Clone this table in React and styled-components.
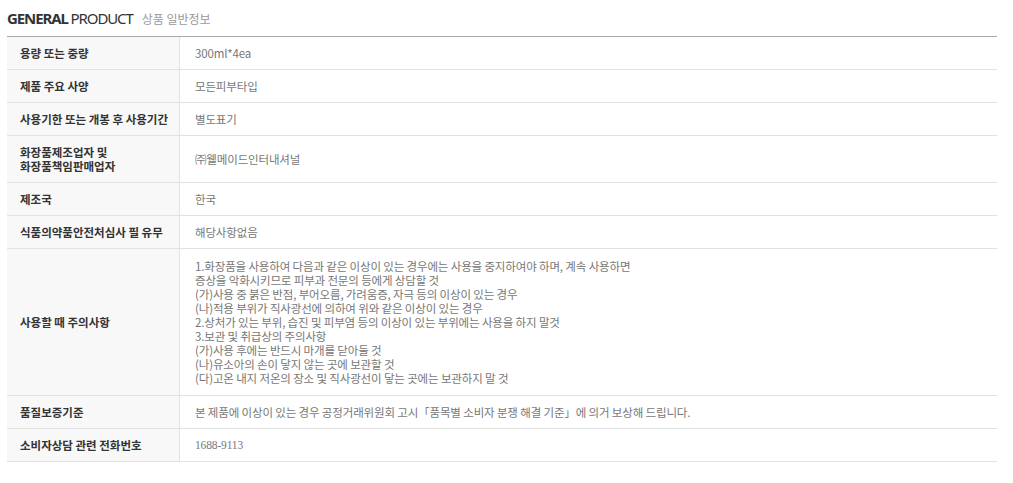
import React from "react";
import styled, { createGlobalStyle } from "styled-components";

const GlobalStyle = createGlobalStyle`
  body {
    margin: 0;
    background: #fff;
    font-family: "Noto Sans CJK KR", "Noto Sans", sans-serif;
  }
`;

const Wrap = styled.section`
  padding: 0 16px 0 7px;
  width: 990px;
`;

const Heading = styled.h3`
  margin: 5px 0 0;
  height: 32px;
  padding-bottom: 5px;
  box-sizing: border-box;
  display: flex;
  align-items: center;
  gap: 9px;
  font-family: "Noto Sans", sans-serif;
  font-size: 15px;
  font-weight: 400;
  letter-spacing: -1.1px;
  color: #333;
  border-bottom: 1px solid #aaa;

  b {
    font-weight: 700;
  }
`;

const Sub = styled.span`
  font-family: "Noto Sans CJK KR", sans-serif;
  font-size: 12px;
  letter-spacing: 0;
  color: #999;
`;

const Table = styled.table`
  width: 100%;
  border-collapse: collapse;
`;

const Row = styled.tr`
  border-bottom: 1px solid #e2e2e2;
`;

const Label = styled.th`
  width: 159px;
  padding: 9px 0 9px 13px;
  background: #f8f8f8;
  border-right: 1px solid #e2e2e2;
  text-align: left;
  font-size: 11.5px;
  font-weight: 700;
  line-height: 14px;
  color: #333;
`;

const Value = styled.td`
  padding: ${p => (p.$long ? "10px 15px" : "9px 15px")};
  font-size: 11.5px;
  line-height: 14px;
  letter-spacing: -0.15px;
  color: #777;
  font-family: ${p =>
    p.$serif ? '"Liberation Serif", serif' : '"Noto Sans CJK KR", sans-serif'};
`;

const Line = styled.div``;

const caution = [
  "1.화장품을 사용하여 다음과 같은 이상이 있는 경우에는 사용을 중지하여야 하며, 계속 사용하면",
  "증상을 악화시키므로 피부과 전문의 등에게 상담할 것",
  "(가)사용 중 붉은 반점, 부어오름, 가려움증, 자극 등의 이상이 있는 경우",
  "(나)적용 부위가 직사광선에 의하여 위와 같은 이상이 있는 경우",
  "2.상처가 있는 부위, 습진 및 피부염 등의 이상이 있는 부위에는 사용을 하지 말것",
  "3.보관 및 취급상의 주의사항",
  "(가)사용 후에는 반드시 마개를 닫아둘 것",
  "(나)유소아의 손이 닿지 않는 곳에 보관할 것",
  "(다)고온 내지 저온의 장소 및 직사광선이 닿는 곳에는 보관하지 말 것",
];

export default function App() {
  return (
    <Wrap>
      <GlobalStyle />
      <Heading>
        <span>
          <b>GENERAL</b> PRODUCT
        </span>
        <Sub>상품 일반정보</Sub>
      </Heading>
      <Table>
        <tbody>
          <Row>
            <Label>용량 또는 중량</Label>
            <Value>300ml*4ea</Value>
          </Row>
          <Row>
            <Label>제품 주요 사양</Label>
            <Value>모든피부타입</Value>
          </Row>
          <Row>
            <Label>사용기한 또는 개봉 후 사용기간</Label>
            <Value>별도표기</Value>
          </Row>
          <Row>
            <Label>
              화장품제조업자 및
              <br />
              화장품책임판매업자
            </Label>
            <Value>㈜웰메이드인터내셔널</Value>
          </Row>
          <Row>
            <Label>제조국</Label>
            <Value>한국</Value>
          </Row>
          <Row>
            <Label>식품의약품안전처심사 필 유무</Label>
            <Value>해당사항없음</Value>
          </Row>
          <Row>
            <Label>사용할 때 주의사항</Label>
            <Value $long>
              {caution.map(t => (
                <Line key={t}>{t}</Line>
              ))}
            </Value>
          </Row>
          <Row>
            <Label>품질보증기준</Label>
            <Value>
              본 제품에 이상이 있는 경우 공정거래위원회 고시「품목별 소비자 분쟁 해결 기준」에 의거 보상해 드립니다.
            </Value>
          </Row>
          <Row>
            <Label>소비자상담 관련 전화번호</Label>
            <Value $serif>1688-9113</Value>
          </Row>
        </tbody>
      </Table>
    </Wrap>
  );
}
